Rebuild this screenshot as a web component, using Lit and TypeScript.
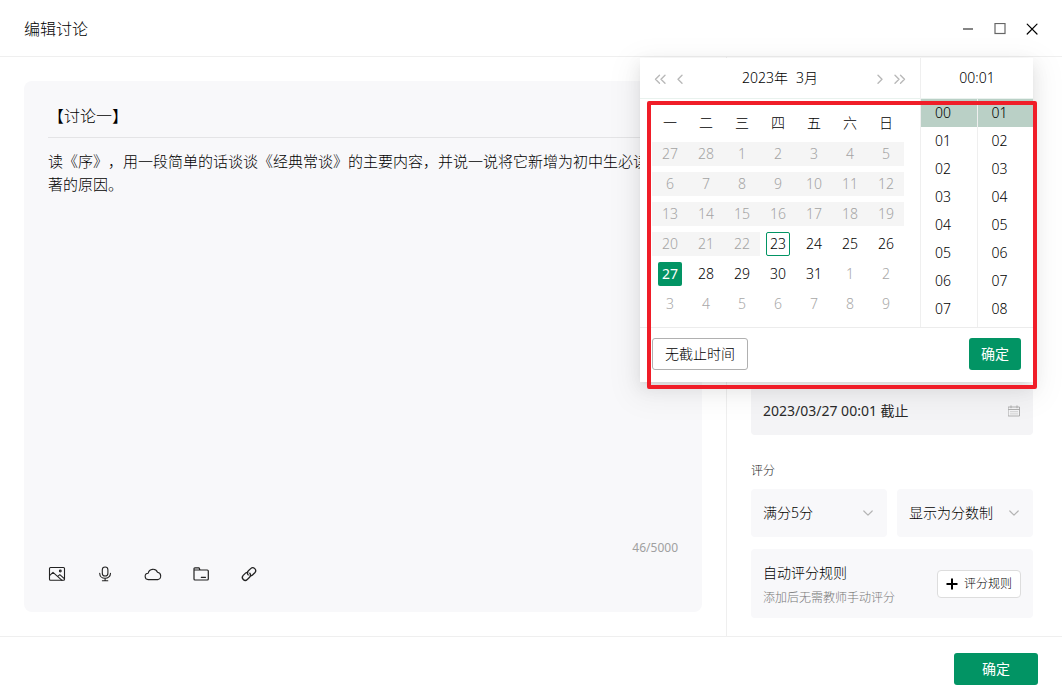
import { LitElement, html, css, svg, nothing } from "lit";
import { customElement, state } from "lit/decorators.js";
import { classMap } from "lit/directives/class-map.js";

const WEEKDAYS = ["一", "二", "三", "四", "五", "六", "日"];

interface Day {
  value: number;
  inMonth: boolean;
  disabled: boolean;
  today: boolean;
}

function buildWeeks(): Day[][] {
  const first = new Date(2023, 1, 27);
  const today = new Date(2023, 2, 23);
  const weeks: Day[][] = [];
  for (let w = 0; w < 6; w++) {
    const row: Day[] = [];
    for (let d = 0; d < 7; d++) {
      const date = new Date(first.getFullYear(), first.getMonth(), first.getDate() + w * 7 + d);
      row.push({
        value: date.getDate(),
        inMonth: date.getMonth() === 2,
        disabled: date < today,
        today: date.getTime() === today.getTime(),
      });
    }
    weeks.push(row);
  }
  return weeks;
}

const pad = (n: number) => String(n).padStart(2, "0");

const icon = (size: number, body: unknown, width = 1) => html`<svg
  width=${size}
  height=${size}
  viewBox="0 0 ${size} ${size}"
  fill="none"
  stroke="currentColor"
  stroke-width=${width}
  stroke-linecap="round"
  stroke-linejoin="round"
  aria-hidden="true"
>${body}</svg>`;

const icons = {
  minimize: icon(12, svg`<path d="M1 6h10" stroke="#666" stroke-linecap="butt" stroke-width="1.6"/>`),
  maximize: icon(12, svg`<rect x="1" y="0.5" width="10" height="10" stroke="#666" stroke-linejoin="miter"/>`, 1.2),
  close: icon(12, svg`<path d="M1.2 1.2l9.8 9.8M11 1.2L1.2 11"/>`, 1.2),
  image: icon(18, svg`<rect x="1.5" y="2.500" width="15" height="12.800" rx="1"/><path d="M1.800 10.300L5 7.300l9 8M9.800 11.400l2-1.700 4.500 4"/><circle cx="12.300" cy="6" r="0.900"/>`, 1.1),
  mic: icon(18, svg`<rect x="6.300" y="2" width="5.600" height="9" rx="2.800"/><path d="M3.700 8.200c0 3 2.300 5.100 5.400 5.100s5.400-2.100 5.400-5.100M9.100 13.400v2.200M6.400 15.700h5.400"/>`, 1.1),
  cloud: icon(18, svg`<path d="M4.500 14.600a3.200 3.200 0 0 1-.3-6.400A4.900 4.900 0 0 1 13.500 7.300a3.700 3.700 0 0 1 .2 7.300z"/>`, 1.1),
  folder: icon(18, svg`<path d="M2 4V14a1 1 0 0 0 1 1h12.300a1 1 0 0 0 1-1V6a1 1 0 0 0-1-1H8L7 2.800H3A1 1 0 0 0 2 4zM2 5h6M9.300 12.300h4.200"/>`, 1.2),
  link: icon(18, svg`<path d="M8.200 9.900a2.900 2.900 0 0 1 .2-4.100l2.300-2.200a2.900 2.900 0 0 1 4.100 4.100L12.500 10a2.900 2.900 0 0 1-2.300.8"/><path d="M9.800 8.200a2.900 2.900 0 0 1-.2 4.100l-2.300 2.200a2.900 2.900 0 0 1-4.100-4.100L5.500 8.100a2.900 2.900 0 0 1 2.300-.8"/>`, 1.3),
  calendar: icon(12, svg`<path d="M.5 2h11v9H.5zM.5 4.500h11M3 .800v2M9 .800v2"/><path d="M2.500 6.700h7M2.500 8.900h7" stroke-dasharray="1 1" stroke-linecap="butt"/>`, 0.9),
  down: icon(12, svg`<path d="M1.800 4L6 8.200 10.200 4"/>`, 1.2),
  left: icon(12, svg`<path d="M8 2.200L4 6.200l4 4"/>`, 1.4),
  right: icon(12, svg`<path d="M4 2.200l4 4-4 4"/>`, 1.4),
  left2: icon(12, svg`<path d="M5.500 2.200l-4 4 4 4M11 2.200l-4 4 4 4"/>`, 1.4),
  right2: icon(12, svg`<path d="M6.500 2.200l4 4-4 4M1 2.200l4 4-4 4"/>`, 1.4),
  plus: icon(12, svg`<path d="M6 .500v11M.500 6h11" stroke-linecap="butt"/>`, 2),
};

const base = css`
  *, *::before, *::after { box-sizing: border-box; }
  button, input, select, textarea {
    margin: 0;
    padding: 0;
    border: 0;
    background: none;
    color: inherit;
    font: inherit;
    outline: none;
  }
  button { cursor: pointer; }
  svg { display: block; }
  .primary {
    height: 32px;
    border-radius: 3px;
    background: #029464;
    color: #fff;
    font-size: 14px;
    font-weight: 400;
  }
`;

@customElement("deadline-picker")
export class DeadlinePicker extends LitElement {
  @state() private selected = 27;
  @state() private hour = 0;
  @state() private minute = 1;

  private weeks = buildWeeks();

  static styles = [
    base,
    css`
      :host {
        display: block;
        position: relative;
        background: #fff;
        font-size: 14px;
        box-shadow: 0 3px 6px -4px rgba(0, 0, 0, 0.12), 0 6px 16px rgba(0, 0, 0, 0.08),
          0 9px 28px 8px rgba(0, 0, 0, 0.05);
      }
      .panels { display: flex; border-bottom: 1px solid #ececec; }
      .date { width: 280px; }
      .bar {
        display: flex;
        align-items: center;
        height: 41px;
        border-bottom: 1px solid #e9f2ee;
      }
      .date .bar { padding: 0 14px; gap: 8px; }
      .bar button { color: #b8b8b8; padding-top: 2px; }
      .month { flex: 1; display: flex; justify-content: center; gap: 8px; }
      table { border-collapse: collapse; margin: 8px 16px 8px 12px; }
      th, td { width: 36px; height: 30px; padding: 0; text-align: center; }
      th { height: 32px; font-weight: inherit; }
      .day { display: block; width: 100%; height: 24px; }
      .day span {
        display: block;
        width: 24px;
        height: 24px;
        margin: 0 auto;
        line-height: 24px;
        border-radius: 2px;
      }
      .outside { color: #a8a8a8; }
      .disabled { color: #a4a4a4; background: #f5f5f5; }
      .today span { border: 1px solid #029464; line-height: 22px; }
      .chosen span { background: #029464; color: #fff; font-weight: 400; }
      .time { flex: 1; border-left: 1px solid #efefef; }
      .time .bar { justify-content: center; }
      .lists { display: flex; height: 228px; }
      ul { flex: 1; margin: 0; padding: 0; list-style: none; overflow: hidden; }
      ul + ul { border-left: 1px solid #efefef; }
      li button {
        display: block;
        width: 100%;
        height: 28px;
        padding-left: 14px;
        text-align: left;
      }
      .current { background: #bad0c6; }
      .actions {
        display: flex;
        justify-content: space-between;
        padding: 10px 12px 12px;
      }
      .none {
        height: 32px;
        padding: 0 12px;
        border: 1px solid #b0b0b0;
        border-radius: 3px;
      }
      .actions .primary { padding: 0 12px; }
      .marker {
        position: absolute;
        inset: 43px -4px -7px 7px;
        border: 4px solid #f01d28;
        border-radius: 2px;
        pointer-events: none;
      }
    `,
  ];

  private list(label: string, from: number, current: number, pick: (n: number) => void) {
    return html`<ul aria-label=${label}>
      ${Array.from({ length: 8 }, (_, i) => i + from).map(
        (n) => html`<li>
          <button class=${classMap({ current: n === current })} @click=${() => pick(n)}>${pad(n)}</button>
        </li>`
      )}
    </ul>`;
  }

  render() {
    return html`
      <div class="panels">
        <div class="date">
          <div class="bar">
            <button aria-label="上一年">${icons.left2}</button>
            <button aria-label="上个月">${icons.left}</button>
            <div class="month"><span>2023年</span><span>3月</span></div>
            <button aria-label="下个月">${icons.right}</button>
            <button aria-label="下一年">${icons.right2}</button>
          </div>
          <table>
            <thead>
              <tr>${WEEKDAYS.map((d) => html`<th scope="col">${d}</th>`)}</tr>
            </thead>
            <tbody>
              ${this.weeks.map(
                (week) => html`<tr>
                  ${week.map(
                    (d) => html`<td>
                      <button
                        class=${classMap({
                          day: true,
                          outside: !d.inMonth,
                          disabled: d.disabled,
                          today: d.today,
                          chosen: d.inMonth && d.value === this.selected,
                        })}
                        ?disabled=${d.disabled}
                        @click=${() => d.inMonth && (this.selected = d.value)}
                      ><span>${d.value}</span></button>
                    </td>`
                  )}
                </tr>`
              )}
            </tbody>
          </table>
        </div>
        <div class="time">
          <div class="bar">${pad(this.hour)}:${pad(this.minute)}</div>
          <div class="lists">
            ${this.list("时", 0, this.hour, (n) => (this.hour = n))}
            ${this.list("分", 1, this.minute, (n) => (this.minute = n))}
          </div>
        </div>
      </div>
      <div class="actions">
        <button class="none">无截止时间</button>
        <button class="primary">确定</button>
      </div>
      <div class="marker"></div>
    `;
  }
}

@customElement("app-root")
export class AppRoot extends LitElement {
  @state() private body =
    "读《序》，用一段简单的话谈谈《经典常谈》的主要内容，并说一说将它新增为初中生必读名著的原因。";
  @state() private pickerOpen = true;

  static styles = [
    base,
    css`
      :host {
        display: flex;
        flex-direction: column;
        min-height: 100vh;
        background: #fff;
        color: #000;
        font-family: "Noto Sans", "Noto Sans CJK SC", sans-serif;
        font-size: 14px;
        font-weight: 300;
        line-height: 22px;
        text-spacing-trim: space-all;
      }
      header {
        display: flex;
        align-items: center;
        justify-content: space-between;
        height: 57px;
        padding: 2px 24px 0;
        border-bottom: 1px solid #efefef;
      }
      h1 { margin: 0; font-size: 16px; font-weight: inherit; }
      .window { display: flex; gap: 20px; }
      main { flex: 1; display: flex; }
      .content { flex: 1; display: flex; padding: 24px; min-width: 0; }
      .editor {
        flex: 1;
        display: flex;
        flex-direction: column;
        min-width: 0;
        padding: 12px 24px 28px;
        border-radius: 8px;
        background: #f8f8fa;
      }
      .title {
        height: 45px;
        border-bottom: 1px solid #e4e4e6;
        font-size: 16px;
      }
      .text {
        flex: 1;
        padding: 12px 12px 0 0;
        resize: none;
        font-size: 15px;
        line-height: 23px;
      }
      .count { color: #a0a0a0; font-size: 12px; font-weight: 400; text-align: right; }
      .tools { display: flex; gap: 30px; margin: 6px 0 1px; color: #222; }
      aside {
        display: flex;
        flex-direction: column;
        justify-content: flex-end;
        width: 336px;
        padding: 24px 29px 18px 24px;
        border-left: 1px solid #efefef;
      }
      .deadline { position: relative; }
      .field {
        display: flex;
        align-items: center;
        height: 48px;
        padding: 0 13px 0 12px;
        border-radius: 4px;
        background: #f4f4f6;
        color: #a8a8a8;
      }
      .field input { flex: 1; min-width: 0; color: #2a2a2a; font-weight: 400; }
      deadline-picker {
        position: absolute;
        right: 0;
        bottom: calc(100% + 5px);
        width: 393px;
        z-index: 2;
      }
      .label { margin: 25px 0 7px; font-size: 12px; color: #222; }
      .pair { display: grid; grid-template-columns: 1fr 1fr; gap: 10px; margin-bottom: 12px; }
      .choice {
        display: grid;
        align-items: center;
        height: 48px;
        border-radius: 4px;
        background: #f8f8fa;
        color: #b4b4b4;
      }
      .choice > * { grid-area: 1 / 1; }
      .choice select {
        width: 100%;
        height: 48px;
        padding: 0 32px 0 12px;
        appearance: none;
        color: #000;
      }
      .choice svg { justify-self: end; margin-right: 13px; pointer-events: none; }
      .rule {
        display: flex;
        align-items: center;
        justify-content: space-between;
        padding: 0 12px;
        border-radius: 4px;
        background: #f8f8fa;
      }
      .about { padding: 13px 0 9px; }
      .rule p { margin: 0; }
      .rule .hint { margin-top: 3px; font-size: 12px; color: #777; }
      .add {
        display: flex;
        align-items: center;
        gap: 6px;
        height: 28px;
        padding: 0 8px;
        border: 1px solid #ddd;
        border-radius: 4px;
        background: #fff;
        font-size: 12px;
      }
      footer {
        display: flex;
        justify-content: flex-end;
        height: 64px;
        padding: 16px 24px;
        border-top: 1px solid #efefef;
      }
      footer .primary { width: 84px; }
    `,
  ];

  render() {
    return html`
      <header>
        <h1>编辑讨论</h1>
        <div class="window">
          <button aria-label="最小化">${icons.minimize}</button>
          <button aria-label="最大化">${icons.maximize}</button>
          <button aria-label="关闭">${icons.close}</button>
        </div>
      </header>
      <main>
        <section class="content">
          <div class="editor">
            <input class="title" aria-label="标题" value="【讨论一】" />
            <textarea
              class="text"
              aria-label="内容"
              spellcheck="false"
              .value=${this.body}
              @input=${(e: Event) => (this.body = (e.target as HTMLTextAreaElement).value)}
            ></textarea>
            <div class="count">${this.body.length}/5000</div>
            <div class="tools">
              <button aria-label="图片">${icons.image}</button>
              <button aria-label="录音">${icons.mic}</button>
              <button aria-label="云盘">${icons.cloud}</button>
              <button aria-label="文件">${icons.folder}</button>
              <button aria-label="链接">${icons.link}</button>
            </div>
          </div>
        </section>
        <aside>
          <div class="deadline">
            <div class="field">
              <input aria-label="截止时间" readonly value="2023/03/27 00:01 截止" @click=${() => (this.pickerOpen = true)} />
              ${icons.calendar}
            </div>
            ${this.pickerOpen ? html`<deadline-picker></deadline-picker>` : nothing}
          </div>
          <div class="label">评分</div>
          <div class="pair">
            <div class="choice">
              <select aria-label="满分"><option>满分5分</option></select>
              ${icons.down}
            </div>
            <div class="choice">
              <select aria-label="显示方式"><option>显示为分数制</option></select>
              ${icons.down}
            </div>
          </div>
          <div class="rule">
            <div class="about">
              <p>自动评分规则</p>
              <p class="hint">添加后无需教师手动评分</p>
            </div>
            <button class="add">${icons.plus}评分规则</button>
          </div>
        </aside>
      </main>
      <footer><button class="primary">确定</button></footer>
    `;
  }
}
